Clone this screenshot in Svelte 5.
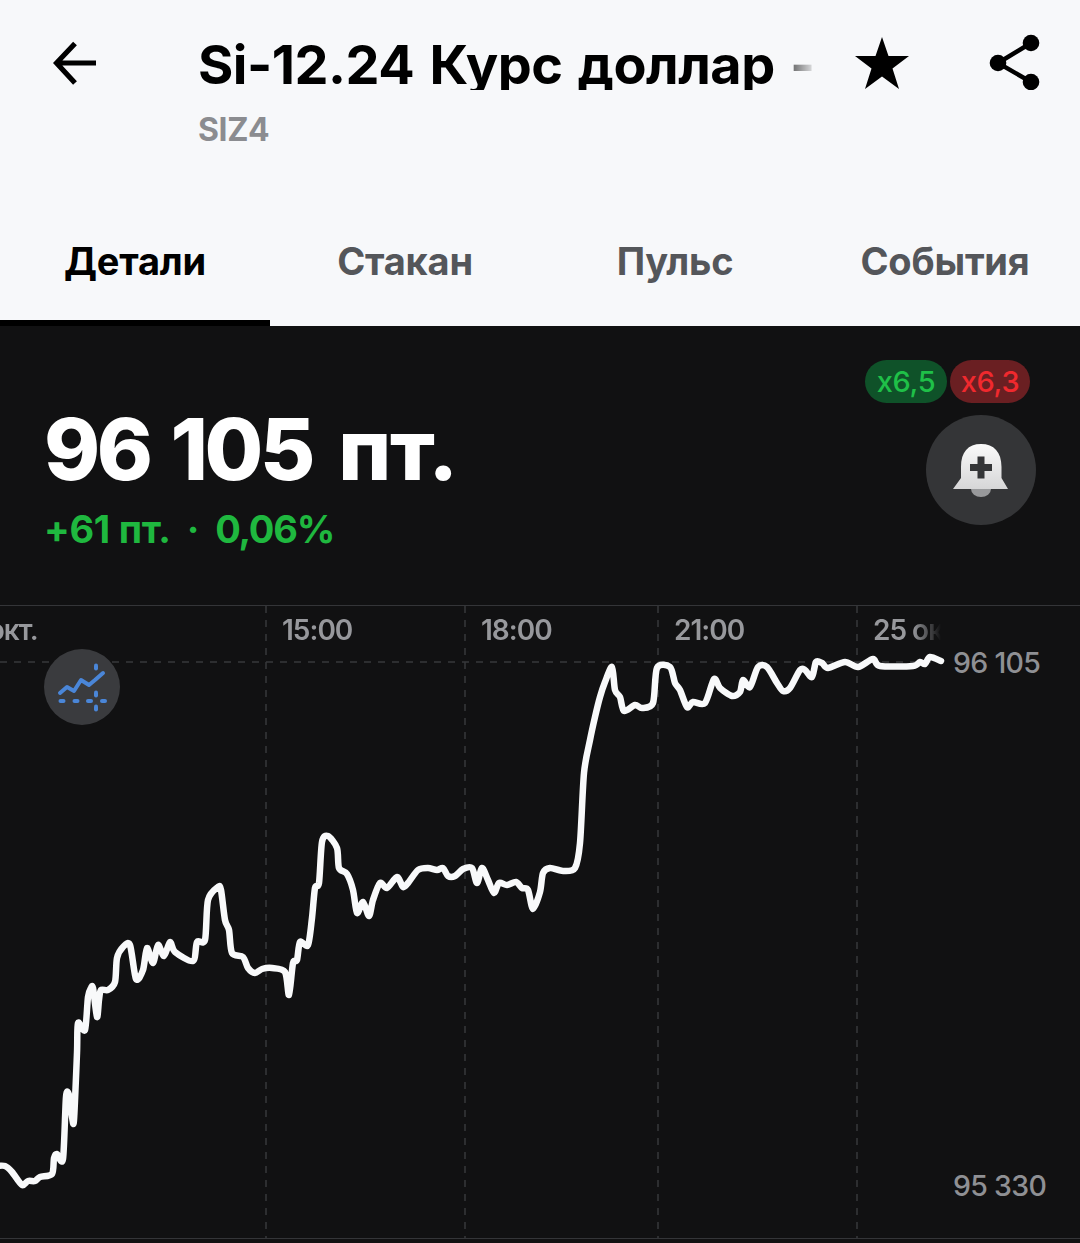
<script>
  const tabs = ['Детали', 'Стакан', 'Пульс', 'События'];
  const gridX = [266, 465, 658, 857];
  const timeLabels = [
    { text: '24 окт.', x: -52 },
    { text: '15:00', x: 282 },
    { text: '18:00', x: 481 },
    { text: '21:00', x: 674 },
    { text: '25 окт.', x: 873 }
  ];

  // points are in page coordinates, the svg viewBox starts at y=605
  const points = [
    [-4,1166],[5,1166],[12,1172],[22,1185],[28,1181],[35,1181],[40,1177],[52,1174],[54,1158],[57,1154],[63,1159],
    [66,1097],[69,1095],[72,1117],[74,1120],[77,1053],[78,1023],[85,1030],[88,997],[91,988],[93,988],[97,1017],
    [99,1000],[101,990],[108,990],[115,982],[117,958],[123,947],[130,945],[136,979],[143,970],[147,948],[153,963],
    [158,945],[164,956],[170,942],[175,952],[193,961],[197,942],[205,940],[208,900],[218,887],[221,890],[225,920],
    [229,930],[232,953],[243,957],[248,968],[255,973],[262,969],[272,968],[285,972],[289,995],[293,963],[297,960],
    [300,942],[308,945],[312,918],[315,888],[319,883],[322,842],[328,836],[337,848],[339,868],[347,874],[353,890],
    [357,913],[363,902],[369,916],[373,900],[380,883],[387,888],[397,877],[403,887],[408,883],[418,870],[428,868],
    [437,870],[443,868],[448,876],[455,876],[463,869],[472,868],[477,883],[482,868],[488,880],[494,893],[499,883],
    [507,885],[516,882],[522,888],[528,890],[533,909],[540,892],[543,873],[550,868],[563,871],[575,868],[580,843],
    [584,773],[590,740],[595,717],[600,697],[605,682],[612,667],[615,690],[620,697],[624,711],[635,705],[642,708],
    [653,703],[657,668],[670,667],[675,683],[680,690],[687,707],[693,702],[705,703],[714,679],[720,688],[732,696],
    [740,692],[743,680],[750,687],[758,667],[767,667],[777,683],[783,691],[790,688],[800,670],[805,670],[812,677],
    [816,662],[822,663],[828,668],[845,662],[858,667],[873,659],[880,666],[913,666],[920,662],[925,664],[930,657],[941,661]
  ];

  // catmull-rom, so the line doesn't look like straight segments
  function smooth(pts) {
    let d = `M${pts[0][0]} ${pts[0][1]}`;
    for (let i = 0; i < pts.length - 1; i++) {
      const a = pts[i - 1] || pts[i];
      const b = pts[i];
      const c = pts[i + 1];
      const e = pts[i + 2] || c;
      const k = 0.14;
      d += ` C${b[0] + (c[0] - a[0]) * k} ${b[1] + (c[1] - a[1]) * k} ${c[0] - (e[0] - b[0]) * k} ${c[1] - (e[1] - b[1]) * k} ${c[0]} ${c[1]}`;
    }
    return d;
  }

  const linePath = smooth(points);
</script>

<div class="page">
  <header class="head">
    <div class="toprow">
      <button class="icon-btn back" aria-label="Назад">
        <svg width="44" height="46" viewBox="0 0 44 46">
          <path d="M43 23H4M22 3.500L3.500 23L22 43" fill="none" stroke="#000" stroke-width="5.200" />
        </svg>
      </button>
      <div class="titles">
        <div class="title">Si-12.24 Курс доллар -</div>
        <div class="ticker">SIZ4</div>
      </div>
      <button class="icon-btn star" aria-label="Избранное">
        <svg width="54" height="52" viewBox="0 0 54 52">
          <path d="M27 0L33.500 19H54L37.500 31.500L44 52L27 39.500L10 52L16.500 31.500L0 19H20.500Z" fill="#000" />
        </svg>
      </button>
      <button class="icon-btn share" aria-label="Поделиться">
        <svg width="52" height="56" viewBox="0 0 52 56">
          <path d="M42 9L9 29L42 48" fill="none" stroke="#000" stroke-width="4.500" />
          <circle cx="42" cy="9" r="8.300" />
          <circle cx="9" cy="29" r="8.300" />
          <circle cx="42" cy="48" r="8.300" />
        </svg>
      </button>
    </div>
    <nav class="tabs">
      {#each tabs as tab, i}
        <div class="tab" class:active={i === 0}>{tab}</div>
      {/each}
    </nav>
  </header>

  <main class="dark">
    <section class="quote">
      <div class="prices">
        <div class="price"><span class="digits">96 105</span> пт.</div>
        <div class="change"><span>+61 пт.</span><span class="sep">·</span><span class="pct">0,06%</span></div>
      </div>
      <div class="side">
        <div class="pills">
          <span class="pill buy">x6,5</span>
          <span class="pill sell">x6,3</span>
        </div>
        <button class="bell" aria-label="Уведомление">
          <svg width="110" height="110" viewBox="0 0 110 110">
            <defs>
              <linearGradient id="bellfill" x1="0" y1="0" x2="0" y2="1">
                <stop offset="0" stop-color="#fafafa" />
                <stop offset="1" stop-color="#d6d6d7" />
              </linearGradient>
            </defs>
            <path d="M45 74h20a10 8 0 0 1-20 0Z" fill="#98999b" />
            <path d="M35 52C35 37 42 29 55 29C68 29 75.500 37 75.500 52V63L82 74H27L35 63Z" fill="url(#bellfill)" />
            <path d="M51.500 41.500h7v7.500h7.500v7h-7.500v7.500h-7v-7.500h-7.500v-7h7.500Z" fill="#343537" />
          </svg>
        </button>
      </div>
    </section>

    <section class="chart">
      <svg class="plot" viewBox="0 605 1080 638" width="1080" height="638">
        <line x1="0" y1="605.500" x2="1080" y2="605.500" class="axis" />
        <line x1="0" y1="1238.500" x2="1080" y2="1238.500" class="axis" />
        <line x1="0" y1="662" x2="941" y2="662" class="grid" />
        {#each gridX as x}
          <line x1={x} y1="606" x2={x} y2="1238" class="grid" />
        {/each}
        <path d={linePath} class="line" />
      </svg>

      <div class="times">
        {#each timeLabels as t}
          <span class="time" style="left:{t.x}px">{t.text}</span>
        {/each}
      </div>

      <span class="level top">96 105</span>
      <span class="level bottom">95 330</span>

      <button class="tool" aria-label="Индикаторы">
        <svg width="76" height="76" viewBox="44 649 76 76">
          <path d="M60 693L67 687L74 691L81 680L89 685L95 680L103 673" fill="none" stroke="#4a86d8" stroke-width="4" stroke-linejoin="round" stroke-linecap="round" />
          <g fill="#4a86d8">
            <rect x="94" y="663.500" width="4" height="7" rx="2" />
            <rect x="94" y="690.500" width="4" height="7" rx="2" />
            <rect x="94" y="704.500" width="4" height="7" rx="2" />
            <rect x="58.500" y="699" width="7" height="4" rx="2" />
            <rect x="72.500" y="699" width="7" height="4" rx="2" />
            <rect x="86" y="699" width="7" height="4" rx="2" />
            <rect x="100" y="699" width="7" height="4" rx="2" />
          </g>
        </svg>
      </button>
    </section>
  </main>
</div>

<style>
  :global(body) {
    background: #111112;
  }

  .page {
    width: 1080px;
    height: 1243px;
    overflow: hidden;
    display: flex;
    flex-direction: column;
    font-family: Inter, "Noto Sans", sans-serif;
  }

  button {
    border: 0;
    padding: 0;
    background: none;
    display: block;
  }

  .icon-btn svg {
    display: block;
  }

  .head {
    height: 326px;
    flex: none;
    background: #f7f8fa;
    display: flex;
    flex-direction: column;
    justify-content: space-between;
  }

  .toprow {
    display: flex;
    align-items: flex-start;
    padding: 40px 0 0 53px;
  }

  .back {
    margin-right: 101px;
  }

  .titles {
    width: 615px;
    margin-right: 42px;
  }

  .title {
    font-size: 54px;
    line-height: 50px;
    font-weight: 700;
    color: #000;
    letter-spacing: -0.5px;
    word-spacing: 3px;
    white-space: nowrap;
    overflow: hidden;
    mask-image: linear-gradient(to right, #000 93.500%, rgba(0, 0, 0, 0.1) 100%);
  }

  .ticker {
    margin-top: 21px;
    font-size: 32px;
    line-height: 38px;
    font-weight: 700;
    color: #8b8c90;
    letter-spacing: -0.4px;
  }

  .star {
    margin-top: -3px;
    margin-right: 80px;
  }

  .share {
    margin-top: -6px;
  }

  .tabs {
    display: flex;
  }

  .tab {
    width: 270px;
    height: 94px;
    box-sizing: border-box;
    padding-top: 6px;
    text-align: center;
    font-size: 38px;
    line-height: 46px;
    font-weight: 700;
    color: #54565a;
    letter-spacing: -0.2px;
    border-bottom: 6px solid transparent;
  }

  .tab.active {
    color: #000;
    border-bottom-color: #000;
  }

  .dark {
    flex: 1;
    background: #111112;
    display: flex;
    flex-direction: column;
  }

  .quote {
    height: 279px;
    flex: none;
    box-sizing: border-box;
    padding: 34px 44px 0 44px;
    display: flex;
    justify-content: space-between;
  }

  .prices {
    padding-top: 44px;
  }

  .price {
    font-size: 85px;
    line-height: 92px;
    font-weight: 800;
    color: #fff;
    letter-spacing: -1.200px;
    word-spacing: 9px;
  }

  .digits {
    letter-spacing: -3.500px;
    word-spacing: 6px;
  }

  .change {
    margin-top: 11px;
    display: flex;
    gap: 16px;
    font-size: 38px;
    line-height: 44px;
    font-weight: 700;
    color: #1fb83f;
    letter-spacing: -0.3px;
  }

  .pct {
    letter-spacing: -1.200px;
  }

  .side {
    display: flex;
    flex-direction: column;
    align-items: flex-end;
  }

  .pills {
    display: flex;
    gap: 3px;
    margin-right: 6px;
  }

  .pill {
    height: 43px;
    border-radius: 22px;
    display: flex;
    align-items: center;
    justify-content: center;
    font-size: 29px;
    font-weight: 500;
    letter-spacing: -0.3px;
  }

  .buy {
    width: 82px;
    background: #0f5229;
    color: #1fc048;
  }

  .sell {
    width: 80px;
    background: #6a1f22;
    color: #f0292e;
  }

  .bell {
    margin-top: 12px;
    width: 110px;
    height: 110px;
    border-radius: 50%;
    background: #343537;
  }

  .bell svg {
    display: block;
  }

  .chart {
    position: relative;
    flex: 1;
  }

  .plot {
    position: absolute;
    left: 0;
    top: 0;
    display: block;
  }

  .axis {
    stroke: #343538;
    stroke-width: 1;
  }

  .grid {
    stroke: #37383b;
    stroke-width: 1.500;
    stroke-dasharray: 7 7;
  }

  .line {
    fill: none;
    stroke: #f8f9fa;
    stroke-width: 6.500;
    stroke-linejoin: round;
    stroke-linecap: round;
  }

  .times {
    position: absolute;
    left: 0;
    top: 1px;
    width: 941px;
    height: 50px;
    overflow: hidden;
    mask-image: linear-gradient(to right, #000 97%, transparent 100%);
  }

  .time {
    position: absolute;
    top: 6px;
    font-size: 28px;
    line-height: 36px;
    font-weight: 600;
    color: #97989c;
    white-space: nowrap;
    letter-spacing: -1px;
  }

  .level {
    position: absolute;
    left: 953px;
    font-size: 28.500px;
    line-height: 36px;
    font-weight: 500;
    color: #8f9094;
    letter-spacing: -0.700px;
    white-space: nowrap;
  }

  .level.top {
    top: 40px;
  }

  .level.bottom {
    top: 563px;
  }

  .tool {
    position: absolute;
    left: 44px;
    top: 44px;
    width: 76px;
    height: 76px;
    border-radius: 50%;
    background: #3a3b3e;
  }

  .tool svg {
    display: block;
  }
</style>
